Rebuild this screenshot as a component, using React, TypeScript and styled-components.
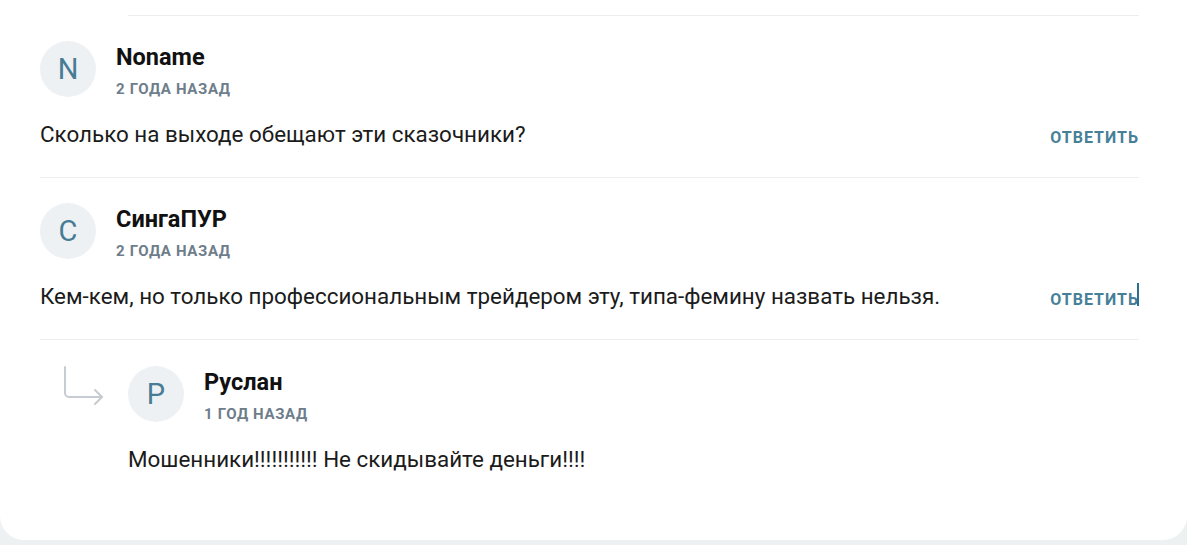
import React from "react";
import styled, { createGlobalStyle } from "styled-components";

const Global = createGlobalStyle`
  html, body { margin: 0; padding: 0; background: #eef1f2; }
  body { font-family: Roboto, "Noto Sans", Arial, sans-serif; height: 545px; overflow: hidden; }
`;

const Card = styled.div`
  background: #ffffff;
  border-radius: 0 0 24px 24px;
  padding: 15px 48px 0 40px;
  box-sizing: content-box;
  height: 525px;
`;

const Divider = styled.div<{ $indent?: number }>`
  height: 1px;
  background: #ebedef;
  margin-left: ${(p) => p.$indent ?? 0}px;
`;

const Comment = styled.div`
  padding: 25px 0 29px;
`;

const ReplyWrap = styled.div`
  display: flex;
  padding: 26px 0 0;
`;

const ArrowCol = styled.div`
  width: 88px;
  flex: none;
  padding-left: 22px;
  box-sizing: border-box;
`;

const ReplyContent = styled.div`
  flex: 1;
`;

const Header = styled.div`
  display: flex;
  align-items: flex-start;
  gap: 20px;
`;

const Avatar = styled.div`
  width: 56px;
  height: 56px;
  border-radius: 50%;
  background: #eef1f4;
  color: #477c94;
  font-size: 29px;
  display: flex;
  align-items: center;
  justify-content: center;
  flex: none;
`;

const Meta = styled.div`
  display: flex;
  flex-direction: column;
  padding-top: 2px;
`;

const Name = styled.div`
  font-size: 23.5px;
  font-weight: 700;
  color: #111111;
  line-height: 28px;
`;

const Date = styled.div`
  font-size: 15px;
  font-weight: 700;
  color: #6e7d8a;
  letter-spacing: 0.65px;
  line-height: 20px;
  margin-top: 8px;
  text-transform: uppercase;
`;

const BodyRow = styled.div`
  display: flex;
  align-items: center;
  justify-content: space-between;
  margin-top: 21px;
`;

const Text = styled.div`
  font-size: 22.4px;
  color: #1b1b1b;
  line-height: 28px;
`;

const ReplyBtn = styled.div`
  font-size: 16px;
  font-weight: 700;
  color: #477f99;
  letter-spacing: 1px;
  text-transform: uppercase;
  padding-top: 6px;
  position: relative;
`;

const Caret = styled.span`
  position: absolute;
  right: 0;
  top: -1px;
  width: 2px;
  height: 23px;
  background: #2d6f8e;
`;

type C = { letter: string; name: string; date: string; text: string; caret?: boolean };

const comments: C[] = [
  { letter: "N", name: "Noname", date: "2 года назад", text: "Сколько на выходе обещают эти сказочники?" },
  {
    letter: "C",
    name: "СингаПУР",
    date: "2 года назад",
    text: "Кем-кем, но только профессиональным трейдером эту, типа-фемину назвать нельзя.",
    caret: true,
  },
];

function CommentHeader({ letter, name, date }: { letter: string; name: string; date: string }) {
  return (
    <Header>
      <Avatar>{letter}</Avatar>
      <Meta>
        <Name>{name}</Name>
        <Date>{date}</Date>
      </Meta>
    </Header>
  );
}

export default function App() {
  return (
    <>
      <Global />
      <Card>
        <Divider $indent={88} />
        {comments.map((c) => (
          <React.Fragment key={c.name}>
            <Comment>
              <CommentHeader letter={c.letter} name={c.name} date={c.date} />
              <BodyRow>
                <Text>{c.text}</Text>
                <ReplyBtn>
                  Ответить
                  {c.caret && <Caret />}
                </ReplyBtn>
              </BodyRow>
            </Comment>
            <Divider />
          </React.Fragment>
        ))}
        <ReplyWrap>
          <ArrowCol>
            <svg width="44" height="42" viewBox="0 0 44 42" fill="none">
              <path
                d="M3 1 V27 a4 4 0 0 0 4 4 H40"
                stroke="#c6ccd1"
                strokeWidth="2"
                strokeLinecap="round"
              />
              <path
                d="M33 24 L40 31 L33 38"
                stroke="#c6ccd1"
                strokeWidth="2"
                strokeLinecap="round"
                strokeLinejoin="round"
              />
            </svg>
          </ArrowCol>
          <ReplyContent>
            <CommentHeader letter="P" name="Руслан" date="1 год назад" />
            <BodyRow>
              <Text>Мошенники!!!!!!!!!!! Не скидывайте деньги!!!!</Text>
            </BodyRow>
          </ReplyContent>
        </ReplyWrap>
      </Card>
    </>
  );
}
